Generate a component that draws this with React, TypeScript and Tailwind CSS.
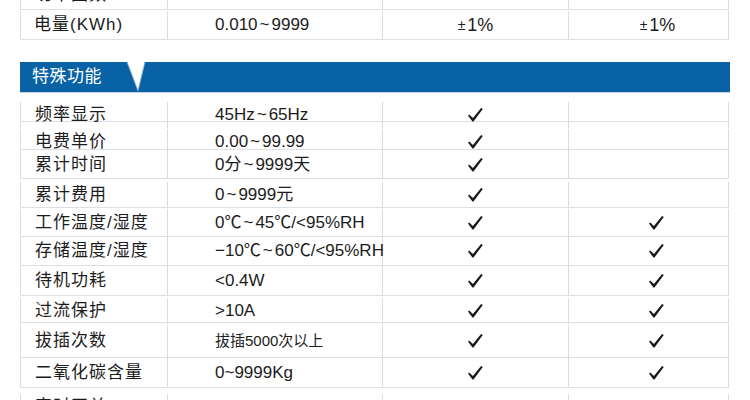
const cols = 'grid grid-cols-[148px_215px_186px_160px]'

const Check = () => (
  <svg width="15" height="14" viewBox="0 0 15 14" className="block">
    <polygon points="0,7.6 1.2,6.6 4.9,10 13.1,0 14.8,1 5.5,13.5 4.4,13.5" fill="#1a1a1a" />
  </svg>
)

// 数值里的“～”画成带间距的小波浪号
const Value = ({ text }: { text: string }) => {
  const parts = text.split('～')
  return (
    <span>
      {parts.map((p, i) => (
        <span key={i}>
          {i > 0 && <span className="mx-[2px]">~</span>}
          {p}
        </span>
      ))}
    </span>
  )
}

type Row = { label: string; value: string; a?: boolean; b?: boolean; h: string; pad: string; small?: boolean }

const rows: Row[] = [
  { label: '频率显示', value: '45Hz～65Hz', a: true, h: 'h-[29px]', pad: 'pt-[9px]' },
  { label: '电费单价', value: '0.00～99.99', a: true, h: 'h-[28px]', pad: 'pt-[7px]' },
  { label: '累计时间', value: '0分～9999天', a: true, h: 'h-[29px]', pad: 'pt-[2px]' },
  { label: '累计费用', value: '0～9999元', a: true, h: 'h-[29px]', pad: 'pt-[3px]' },
  { label: '工作温度/湿度', value: '0℃～45℃/<95%RH', a: true, b: true, h: 'h-[29px]', pad: 'pt-[1px]' },
  { label: '存储温度/湿度', value: '−10℃～60℃/<95%RH', a: true, b: true, h: 'h-[29px]', pad: 'pt-0' },
  { label: '待机功耗', value: '<0.4W', a: true, b: true, h: 'h-[30px]', pad: 'pt-0' },
  { label: '过流保护', value: '>10A', a: true, b: true, h: 'h-[27px]', pad: 'pt-[2px]' },
  { label: '拔插次数', value: '拔插5000次以上', a: true, b: true, h: 'h-[35px]', pad: 'pt-[2px]', small: true },
  { label: '二氧化碳含量', value: '0~9999Kg', a: true, b: true, h: 'h-[30px]', pad: 'pt-0' },
  { label: '定时开关', value: '', a: true, b: true, h: 'h-[30px]', pad: 'pt-[6px]' },
]

const TableRow = ({ r }: { r: Row }) => (
  <div className={`${cols} ${r.h} ${r.pad} border-b-[1.5px] border-[#dcdfe4] box-border`}>
    <div className="flex items-center pl-[14px] tracking-[1px] text-[17px] border-l border-r border-[#d3deeb]">{r.label}</div>
    <div className={`flex items-center pl-[47px] border-r border-[#d3deeb] ${r.small ? 'text-[15px]' : 'text-[17px]'}`}>
      <Value text={r.value} />
    </div>
    <div className="flex items-center justify-center border-r border-[#d3deeb]">{r.a && <Check />}</div>
    <div className="flex items-center justify-center pl-[16px] border-r border-[#d3deeb]">{r.b && <Check />}</div>
  </div>
)

export default function App() {
  return (
    <div
      className="w-[750px] h-[400px] overflow-hidden bg-white text-[#1c1c1c]"
      style={{ fontFamily: '"Liberation Sans", "Noto Sans CJK SC", sans-serif' }}
    >
      <div className="ml-[20px] w-[709px]">
        {/* 基本参数（尾部） */}
        <div className={`${cols} h-[30px] -mt-[20px] border-b-[1.5px] border-[#dcdfe4]`}>
          <div className="flex items-center pl-[14px] tracking-[1px] text-[17px] border-l border-r border-[#d3deeb]">功率因数</div>
          <div className="flex items-center pl-[47px] text-[17px] border-r border-[#d3deeb]">
            <Value text="0.00～1.00" />
          </div>
          <div className="border-r border-[#d3deeb]" />
          <div className="border-r border-[#d3deeb]" />
        </div>
        <div className={`${cols} h-[30px] pt-[1px] border-b-[1.5px] border-[#dcdfe4]`}>
          <div className="flex items-center pl-[13px] tracking-[1px] text-[17px] border-l border-r border-[#d3deeb]">电量(KWh)</div>
          <div className="flex items-center pl-[47px] text-[17px] border-r border-[#d3deeb]">
            <Value text="0.010～9999" />
          </div>
          <div className="flex items-center justify-center text-[18px] border-r border-[#d3deeb]">
            <span className="text-[14px] mr-[2px]">±</span>1%
          </div>
          <div className="flex items-center justify-center pl-[18px] text-[18px] border-r border-[#d3deeb]">
            <span className="text-[14px] mr-[2px]">±</span>1%
          </div>
        </div>

        {/* 特殊功能 */}
        <div className="relative mt-[22px] h-[31px] w-[710px] bg-[#0862a5] border-b border-[#c9d3df] flex items-center pl-[12px]">
          <span className="text-white text-[17px] tracking-[0.5px]">特殊功能</span>
          <svg width="20" height="31" viewBox="0 0 20 31" className="absolute left-[107px] top-0">
            <polygon points="0,0 18,0 11,29" fill="#ffffff" />
            <polyline points="0,0 11,29 18,0" fill="none" stroke="#7fa8cf" strokeWidth="0.8" />
          </svg>
        </div>
        {rows.map((r) => (
          <TableRow key={r.label} r={r} />
        ))}
      </div>
    </div>
  )
}
